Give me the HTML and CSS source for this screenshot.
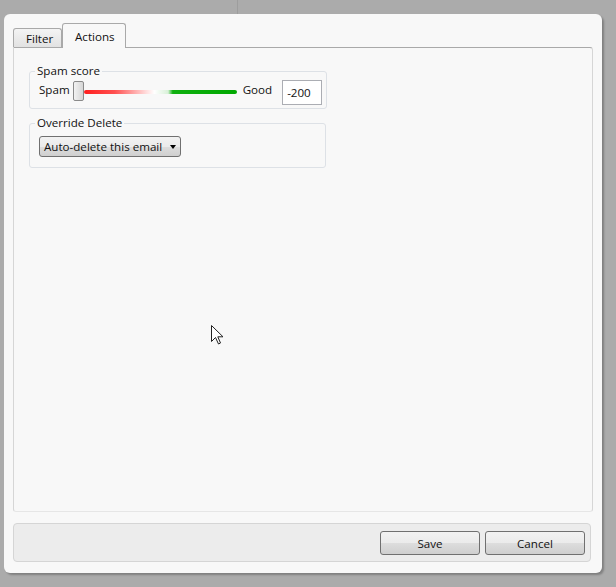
FILE: index.html
```html
<!DOCTYPE html>
<html>
<head>
<meta charset="utf-8">
<link rel="stylesheet" href="styles.css">
</head>
<body>
<div class="desk">
  <div class="desk-top"><div class="desk-line"></div></div>
  <div class="dialog">
    <div class="tabs">
      <div class="tab">Filter</div>
      <div class="tab active">Actions</div>
    </div>
    <div class="panel">
      <fieldset class="group">
        <legend>Spam score</legend>
        <div class="slider-row">
          <span class="lbl">Spam</span>
          <div class="slider">
            <div class="track"></div>
            <div class="thumb"></div>
          </div>
          <span class="lbl good">Good</span>
          <div class="textbox">-200</div>
        </div>
      </fieldset>
      <fieldset class="group">
        <legend>Override Delete</legend>
        <div class="combo">Auto-delete this email<span class="arrow"></span></div>
      </fieldset>
    </div>
    <div class="footer">
      <button class="btn">Save</button>
      <button class="btn">Cancel</button>
    </div>
  </div>
  <svg class="cursor" width="13" height="20" viewBox="0 0 13 20"><path d="M0.5 0.5 L0.5 16.5 L4.5 12.5 L7.5 19 L9.5 18 L6.8 11.8 L12 11.8 Z" fill="#fff" stroke="#222" stroke-width="1" stroke-linejoin="miter"/></svg>
</div>
</body>
</html>
```

FILE: styles.css
```css
html, body {
  margin: 0;
  padding: 0;
  background: #ababab;
  font-family: "Open Sans", "Noto Sans", sans-serif;
  font-size: 11.6px;
  color: #111;
}
.desk {
  position: relative;
  width: 616px;
  height: 587px;
  overflow: hidden;
}
.desk-top {
  height: 14px;
  position: relative;
}
.desk-line {
  margin-left: 237px;
  width: 1px;
  height: 14px;
  background: #9d9d9d;
}
.dialog {
  margin-left: 4px;
  width: 598px;
  height: 559px;
  background: #f8f8f8;
  border-radius: 6px;
  box-shadow: 2px 2px 2px rgba(0,0,0,0.25);
  box-sizing: border-box;
  padding: 9px 11px 11px 9px;
  display: flex;
  flex-direction: column;
}
.tabs {
  display: flex;
  align-items: flex-end;
  height: 24px;
  margin-right: -2px;
}
.tab {
  height: 19px;
  box-sizing: border-box;
  padding: 0 7px 0 12px;
  border: 1px solid #a9a9a9;
  border-bottom: none;
  border-radius: 3px 3px 0 0;
  background: linear-gradient(#f4f4f4, #e2e2e2);
  line-height: 19px;
  width: 49px;
}
.tab.active {
  height: 25px;
  width: 64px;
  background: #f8f8f8;
  margin-bottom: -1px;
  position: relative;
  z-index: 1;
  padding: 0 0 0 12px;
  line-height: 25px;
}
.panel {
  flex: 1;
  border: 1px solid #d6d6d6;
  border-top-color: #a9a9a9;
  border-bottom-color: #e6e6e6;
  border-radius: 0 3px 3px 3px;
  margin-right: -2px;
  margin-bottom: 11px;
  padding: 16px 0 0 15px;
  display: flex;
  flex-direction: column;
  gap: 7px;
}
.group {
  width: 297px;
  box-sizing: border-box;
  margin: 0;
  border: 1px solid #dde1e6;
  border-radius: 3px;
  padding: 0 4px 4px 9px;
}
.group legend {
  padding: 0 2px;
  margin-left: -4px;
  line-height: 14px;
}
.slider-row {
  display: flex;
  align-items: center;
  height: 26px;
}
.lbl {
  line-height: 14px;
  margin-top: -3px;
}
.slider {
  position: relative;
  width: 164px;
  height: 22px;
  margin-left: 3px;
}
.track {
  position: absolute;
  left: 11px;
  right: 0;
  top: 10px;
  height: 4px;
  border-radius: 2px;
  background: linear-gradient(to right, #ff1e1e 0%, #ff5050 20%, #ffd8d8 40%, #ffffff 46%, #d8f0d8 55%, #10b010 58%, #00a800 100%);
}
.thumb {
  position: absolute;
  left: 0;
  top: 1px;
  width: 11px;
  height: 20px;
  box-sizing: border-box;
  border: 1px solid #8a8a8a;
  border-radius: 2px;
  background: linear-gradient(to right, #f2f2f2, #d6d6d6);
}
.good {
  margin-left: 6px;
}
.textbox {
  margin-left: 10px;
  width: 40px;
  height: 25px;
  box-sizing: border-box;
  border: 1px solid #abadb3;
  background: #fff;
  line-height: 23px;
  padding-left: 4px;
  margin-top: 2px;
}
.combo {
  position: relative;
  width: 142px;
  height: 21px;
  box-sizing: border-box;
  border: 1px solid #707070;
  border-radius: 3px;
  background: linear-gradient(#f2f2f2 0%, #ebebeb 50%, #dddddd 51%, #cfcfcf 100%);
  line-height: 19px;
  padding-left: 4px;
  margin: 6px 0 6px 0;
}
.arrow {
  position: absolute;
  right: 4px;
  top: 8px;
  width: 0;
  height: 0;
  border-left: 3.5px solid transparent;
  border-right: 3.5px solid transparent;
  border-top: 4px solid #000;
}
.footer {
  height: 39px;
  box-sizing: border-box;
  background: #ececec;
  border: 1px solid #d5d5d5;
  border-radius: 4px;
  display: flex;
  justify-content: flex-end;
  align-items: center;
  gap: 5px;
  padding-right: 5px;
  padding-top: 1px;
}
.btn {
  width: 100px;
  height: 24px;
  border: 1px solid #707070;
  border-radius: 3px;
  background: linear-gradient(#f2f2f2 0%, #ebebeb 50%, #dddddd 51%, #cfcfcf 100%);
  font-family: inherit;
  font-size: 11.6px;
  color: #111;
  padding: 0;
}
.cursor {
  position: absolute;
  left: 211px;
  top: 325px;
}
```
